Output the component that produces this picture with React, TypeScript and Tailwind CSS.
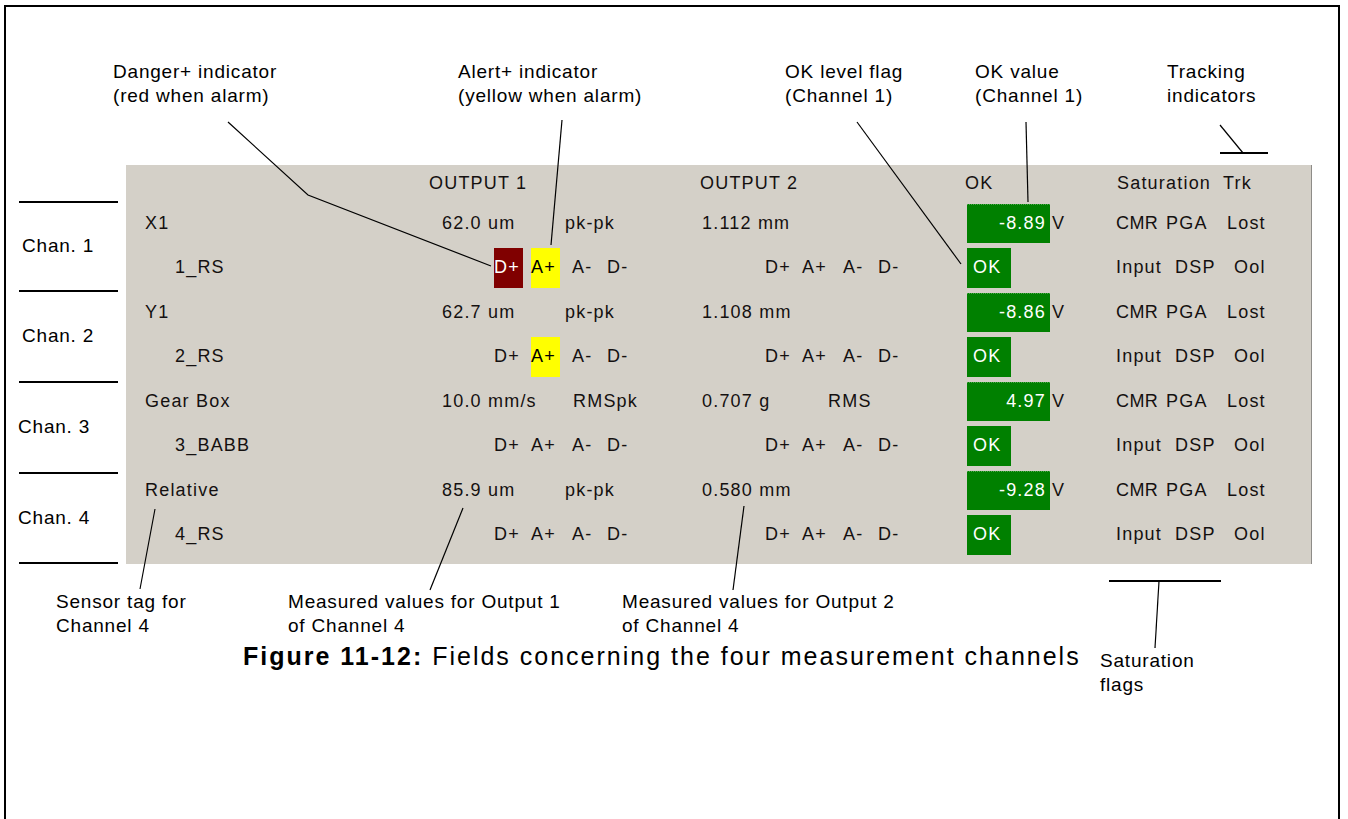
import React from "react";

type Row = {
  tag: string;
  sub: string;
  v1: string;
  u1: string;
  u1pad: boolean;
  v2: string;
  u2: string;
  ok: string;
  danger: boolean;
  alert: boolean;
};

const rows: Row[] = [
  { tag: "X1", sub: "1_RS", v1: "62.0 um", u1: "pk-pk", u1pad: false, v2: "1.112 mm", u2: "", ok: "-8.89", danger: true, alert: true },
  { tag: "Y1", sub: "2_RS", v1: "62.7 um", u1: "pk-pk", u1pad: false, v2: "1.108 mm", u2: "", ok: "-8.86", danger: false, alert: true },
  { tag: "Gear Box", sub: "3_BABB", v1: "10.0 mm/s", u1: "RMSpk", u1pad: true, v2: "0.707 g", u2: "RMS", ok: "4.97", danger: false, alert: false },
  { tag: "Relative", sub: "4_RS", v1: "85.9 um", u1: "pk-pk", u1pad: false, v2: "0.580 mm", u2: "", ok: "-9.28", danger: false, alert: false },
];

function Indicators({ danger, alert }: { danger: boolean; alert: boolean }) {
  return (
    <div className="flex items-center">
      <div className="w-[37px] flex items-center">
        {danger ? (
          <span className="w-[29px] h-[40px] bg-[#800000] text-white flex items-center">D+</span>
        ) : (
          <span>D+</span>
        )}
      </div>
      <div className="w-[41px] flex items-center">
        {alert ? (
          <span className="w-[29px] h-[40px] bg-[#ffff00] text-black flex items-center">A+</span>
        ) : (
          <span>A+</span>
        )}
      </div>
      <div className="w-[35px]">A-</div>
      <div>D-</div>
    </div>
  );
}

function ValueRow({ r }: { r: Row }) {
  return (
    <div className="flex items-center h-[44.5px] pl-[19px] whitespace-nowrap">
      <div className="w-[297px]">{r.tag}</div>
      <div className="w-[123px]">{r.v1}</div>
      <div className={r.u1pad ? "w-[137px] pl-[8px]" : "w-[137px]"}>{r.u1}</div>
      <div className="w-[126px]">{r.v2}</div>
      <div className="w-[139px]">{r.u2}</div>
      <div className="w-[149px] flex items-center">
        <div className="w-[83px] h-[39px] bg-[#008000] text-white flex items-center justify-end pr-[4px] border-t border-dotted border-[#4da64d]">
          {r.ok}
        </div>
        <span className="ml-[2px]">V</span>
      </div>
      <div className="w-[50px] tracking-[0.4px]">CMR</div>
      <div className="w-[61px]">PGA</div>
      <div>Lost</div>
    </div>
  );
}

function FlagRow({ r }: { r: Row }) {
  return (
    <div className="flex items-center h-[44.5px] pl-[49px] whitespace-nowrap">
      <div className="w-[319px]">{r.sub}</div>
      <div className="w-[271px]">
        <Indicators danger={r.danger} alert={r.alert} />
      </div>
      <div className="w-[202px]">
        <Indicators danger={false} alert={false} />
      </div>
      <div className="w-[149px] flex items-center">
        <div className="w-[44px] h-[40px] bg-[#008000] text-white flex items-center pl-[6px]">OK</div>
      </div>
      <div className="w-[59px]">Input</div>
      <div className="w-[59px]">DSP</div>
      <div>Ool</div>
    </div>
  );
}

function Panel() {
  return (
    <div className="w-[1186px] h-[399px] bg-[#d4d0c8] border-r border-[#8e8c88] text-[18px] tracking-[1.2px] text-[#141010]">
      <div className="flex items-center h-[36px] pl-[303px] whitespace-nowrap">
        <div className="w-[271px]">OUTPUT 1</div>
        <div className="w-[265px]">OUTPUT 2</div>
        <div className="w-[152px]">OK</div>
        <div className="w-[106px]">Saturation</div>
        <div>Trk</div>
      </div>
      {rows.map((r) => (
        <React.Fragment key={r.sub}>
          <ValueRow r={r} />
          <FlagRow r={r} />
        </React.Fragment>
      ))}
    </div>
  );
}

function ChanColumn() {
  return (
    <div className="w-[120px] flex flex-col pt-[36px] text-[19px] tracking-[0.8px]">
      <div className="ml-[13px] w-[99px] h-[2px] bg-black" />
      <div className="h-[87px] flex items-center pl-[16px]">Chan. 1</div>
      <div className="ml-[13px] w-[99px] h-[2px] bg-black" />
      <div className="h-[89px] flex items-center pl-[16px]">Chan. 2</div>
      <div className="ml-[13px] w-[99px] h-[2px] bg-black" />
      <div className="h-[89px] flex items-center pl-[12px]">Chan. 3</div>
      <div className="ml-[13px] w-[99px] h-[2px] bg-black" />
      <div className="h-[88px] flex items-center pl-[12px]">Chan. 4</div>
      <div className="ml-[13px] w-[99px] h-[2px] bg-black" />
    </div>
  );
}

function Leaders() {
  return (
    <svg
      className="absolute left-0 top-0 pointer-events-none"
      width={1348}
      height={819}
      viewBox="0 0 1348 819"
      fill="none"
      stroke="#000"
    >
      <polyline points="228,122 308,195 491,266" strokeWidth={1.2} />
      <line x1={562} y1={120} x2={551} y2={245} strokeWidth={1.2} />
      <line x1={857} y1={122} x2={961} y2={264} strokeWidth={1.2} />
      <line x1={1026} y1={122} x2={1028} y2={202} strokeWidth={1.2} />
      <line x1={1220} y1={125} x2={1243} y2={153} strokeWidth={1.2} />
      <line x1={1220} y1={153} x2={1268} y2={153} strokeWidth={2} />
      <line x1={155} y1={509} x2={140} y2={589} strokeWidth={1.2} />
      <line x1={463} y1={508} x2={430} y2={590} strokeWidth={1.2} />
      <line x1={744} y1={506} x2={733} y2={590} strokeWidth={1.2} />
      <line x1={1109} y1={581} x2={1221} y2={581} strokeWidth={2} />
      <line x1={1159} y1={581} x2={1155} y2={648} strokeWidth={1.2} />
    </svg>
  );
}

export default function App() {
  return (
    <div className="relative w-[1348px] h-[819px] bg-white overflow-hidden font-['Liberation_Sans',Arial,sans-serif] text-black">
      <div className="ml-[4px] mt-[5px] w-[1336px] h-[840px] border-2 border-black">
        <div className="h-[158px] pt-[53px] pl-[107px] flex text-[19px] leading-[24px] tracking-[0.8px] whitespace-nowrap">
          <div className="w-[345px]">
            Danger+ indicator
            <br />
            (red when alarm)
          </div>
          <div className="w-[327px]">
            Alert+ indicator
            <br />
            (yellow when alarm)
          </div>
          <div className="w-[190px]">
            OK level flag
            <br />
            (Channel 1)
          </div>
          <div className="w-[192px]">
            OK value
            <br />
            (Channel 1)
          </div>
          <div>
            Tracking
            <br />
            indicators
          </div>
        </div>
        <div className="flex">
          <ChanColumn />
          <Panel />
        </div>
        <div className="mt-[26px] flex">
          <div className="w-[1094px] flex flex-col">
            <div className="flex pl-[50px] text-[19px] leading-[24px] tracking-[0.8px] whitespace-nowrap">
              <div className="w-[232px]">
                Sensor tag for
                <br />
                Channel 4
              </div>
              <div className="w-[334px]">
                Measured values for Output 1
                <br />
                of Channel 4
              </div>
              <div>
                Measured values for Output 2
                <br />
                of Channel 4
              </div>
            </div>
            <div className="mt-[3px] ml-[237px] text-[25px] leading-[30px] tracking-[2px] whitespace-nowrap">
              <span className="font-bold">Figure 11-12:</span> Fields concerning the four measurement channels
            </div>
          </div>
          <div className="mt-[59px] text-[19px] leading-[24px] tracking-[0.8px] whitespace-nowrap">
            Saturation
            <br />
            flags
          </div>
        </div>
      </div>
      <Leaders />
    </div>
  );
}
